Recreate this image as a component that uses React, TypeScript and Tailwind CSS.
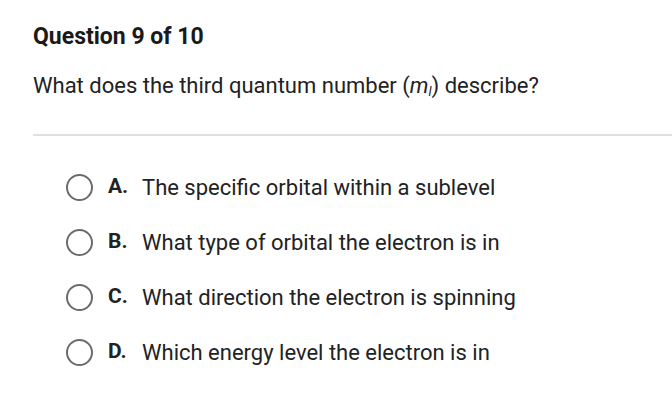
import React from "react";

const options = [
  { letter: "A.", text: "The specific orbital within a sublevel" },
  { letter: "B.", text: "What type of orbital the electron is in" },
  { letter: "C.", text: "What direction the electron is spinning" },
  { letter: "D.", text: "Which energy level the electron is in" },
];

export default function App() {
  return (
    <div className="h-[415px] w-[672px] overflow-hidden bg-white font-['Roboto',sans-serif] text-[#222]">
      <div className="pl-[33px] pt-[23px]">
        <h1 className="text-[23px] font-bold leading-[28px] text-[#1a1a1a]">Question 9 of 10</h1>
        <p className="mt-[20px] text-[22px] leading-[30px]">
          What does the third quantum number (<i>m</i>
          <sub className="text-[13px] italic">l</sub>) describe?
        </p>
        <div className="mt-[33px] h-[2px] bg-[#e0e0e0]" />
      </div>
      <ul className="mt-[37px] flex flex-col gap-[27px] pl-[66px]">
        {options.map((o) => (
          <li key={o.letter} className="flex h-[28px] items-center">
            <span className="h-[27px] w-[27px] rounded-full border-2 border-[#6b6b6b]" />
            <span className="ml-[15px] w-[34px] text-[21px] font-bold">{o.letter}</span>
            <span className="text-[22px]">{o.text}</span>
          </li>
        ))}
      </ul>
    </div>
  );
}
